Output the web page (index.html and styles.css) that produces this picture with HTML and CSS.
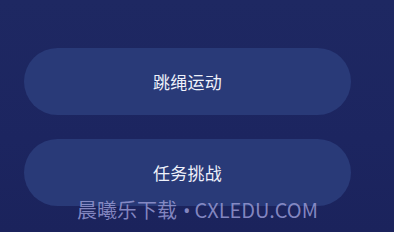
FILE: index.html
```html
<!DOCTYPE html>
<html lang="zh">
<head>
<meta charset="utf-8">
<link rel="stylesheet" href="styles.css">
</head>
<body>
<div class="page">
  <div class="menu">
    <div class="btn">跳绳运动</div>
    <div class="btn">任务挑战</div>
  </div>
  <div class="watermark">晨曦乐下载<span class="dot">•</span>CXLEDU.COM</div>
</div>
</body>
</html>
```
FILE: styles.css
```css
html, body {
  margin: 0;
  padding: 0;
}
body {
  width: 394px;
  height: 232px;
  overflow: hidden;
  background: linear-gradient(180deg, #1e2862 0%, #1c2560 60%, #1b235c 100%);
  font-family: "Noto Sans CJK SC", "Noto Sans", sans-serif;
}
.page {
  position: relative;
  width: 394px;
  height: 232px;
}
.menu {
  display: flex;
  flex-direction: column;
  gap: 24px;
  padding: 48px 0 0 24px;
  width: 327px;
}
.btn {
  height: 67px;
  border-radius: 34px;
  background: #293a78;
  color: #eef1fa;
  font-size: 17px;
  display: flex;
  align-items: center;
  justify-content: center;
  letter-spacing: 0.3px;
}
.watermark {
  position: absolute;
  left: 77px;
  top: 196px;
  font-size: 20px;
  line-height: 28px;
  color: rgba(150, 152, 210, 0.85);
  font-family: "Noto Sans CJK SC", "Open Sans", sans-serif;
  white-space: nowrap;
}
.dot {
  font-family: "Open Sans", sans-serif;
  margin: 0 4px 0 6px;
}
```
